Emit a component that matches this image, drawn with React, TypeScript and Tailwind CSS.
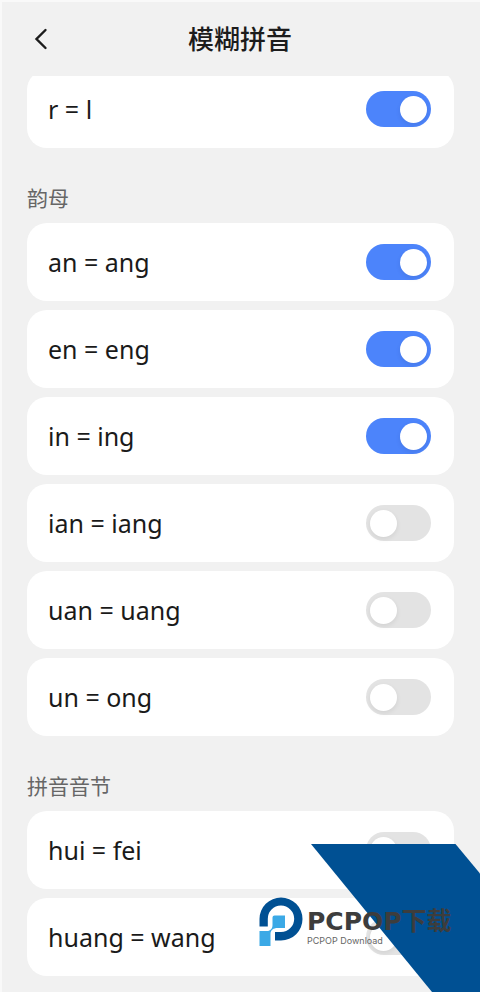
import React, { useId, useState } from 'react';

type Rule = {
  label: string;
  on: boolean;
};

const shengmu: Rule[] = [{ label: 'r = l', on: true }];

const yunmu: Rule[] = [
  { label: 'an = ang', on: true },
  { label: 'en = eng', on: true },
  { label: 'in = ing', on: true },
  { label: 'ian = iang', on: false },
  { label: 'uan = uang', on: false },
  { label: 'un = ong', on: false },
];

const yinjie: Rule[] = [
  { label: 'hui = fei', on: false },
  { label: 'huang = wang', on: false },
];

const RuleRow = ({ label, on }: Rule) => {
  const id = useId();
  const [checked, setChecked] = useState(on);

  return (
    <li className="flex h-[78px] items-center justify-between rounded-[20px] bg-white pl-[21px] pr-[23px]">
      <label htmlFor={id} className="flex-1 text-[25px] leading-8 text-[#1a1a1a]">
        {label}
      </label>
      <input
        id={id}
        type="checkbox"
        role="switch"
        checked={checked}
        onChange={(e) => setChecked(e.target.checked)}
        className="flex h-9 w-[65px] shrink-0 cursor-pointer appearance-none items-center rounded-full bg-[#e3e3e3] px-1 before:size-[27px] before:rounded-full before:bg-white before:shadow-[0_2px_5px_rgba(0,0,0,0.08)] before:content-[''] checked:justify-end checked:bg-[#4c84fb]"
      />
    </li>
  );
};

const RuleList = ({ rules }: { rules: Rule[] }) => (
  <ul className="flex flex-col gap-[9px]">
    {rules.map((rule) => (
      <RuleRow key={rule.label} {...rule} />
    ))}
  </ul>
);

const SectionTitle = ({ children }: { children: React.ReactNode }) => (
  <h2 className="mb-[11px] mt-9 text-[21px] leading-7 text-[#666666]">{children}</h2>
);

const Watermark = () => (
  <div className="pointer-events-none absolute bottom-0 right-0 h-[148px] w-[222px]">
    <svg viewBox="53 0 169 148" className="absolute bottom-0 right-0 h-[148px] w-[169px]" aria-hidden="true">
      <path d="M53 0H197.500L222 29.500V148H174Z" fill="#005093" />
    </svg>
    <div className="absolute bottom-[45px] left-px flex items-start gap-1">
      <svg viewBox="0 0 44 50" className="h-[50px] w-11" aria-hidden="true">
        <path
          d="M0.500 29.500V22A21.500 21.500 0 1 1 22 43.500H16V35H22A13.200 13.200 0 1 0 8.800 22V29.500Z"
          fill="#005093"
        />
        <path
          d="M15.500 18.500H26V31H18.500C14.500 31 11.500 33 11.500 37V49H0.500V34H8C11.500 34 13.500 31.500 13.500 28V20.500Q13.500 18.500 15.500 18.500Z"
          fill="#3ba9e6"
        />
      </svg>
      <div className="pt-3 text-[#3d3d3d]">
        <p className="whitespace-nowrap font-['DejaVu_Sans','Noto_Sans_CJK_SC',sans-serif] text-[25px] font-bold leading-[26px]">
          PCPOP下载
        </p>
        <p className="font-['Inter',sans-serif] text-[9px] leading-3 text-[#666666]">PCPOP Download</p>
      </div>
    </div>
  </div>
);

const App = () => {
  return (
    <div className="relative min-h-screen overflow-hidden border-l-2 border-t-2 border-[#f9f9f9] bg-[#f1f1f1] pb-4 font-['Noto_Sans','Noto_Sans_CJK_SC',sans-serif]">
      {/* 顶部导航 */}
      <header className="sticky top-0 z-10 grid h-[74px] grid-cols-[48px_1fr_48px] items-center bg-[#f1f1f1] pl-[15px] pr-[17px]">
        <button type="button" aria-label="返回" className="flex size-12 items-center justify-center">
          <svg viewBox="0 0 24 24" className="size-6" fill="none" stroke="#1c1c1c" strokeWidth="2.4" strokeLinecap="round">
            <path d="M16.500 3L7.500 12L16.500 21" />
          </svg>
        </button>
        <h1 className="text-center text-[26px] font-medium leading-9 text-[#1c1c1c]">模糊拼音</h1>
      </header>

      {/* 列表已向上滚动一点 */}
      <main className="-mt-1.5 pl-[25px] pr-[26px]">
        <RuleList rules={shengmu} />
        <SectionTitle>韵母</SectionTitle>
        <RuleList rules={yunmu} />
        <SectionTitle>拼音音节</SectionTitle>
        <RuleList rules={yinjie} />
      </main>

      <Watermark />
    </div>
  );
};

export default App;
